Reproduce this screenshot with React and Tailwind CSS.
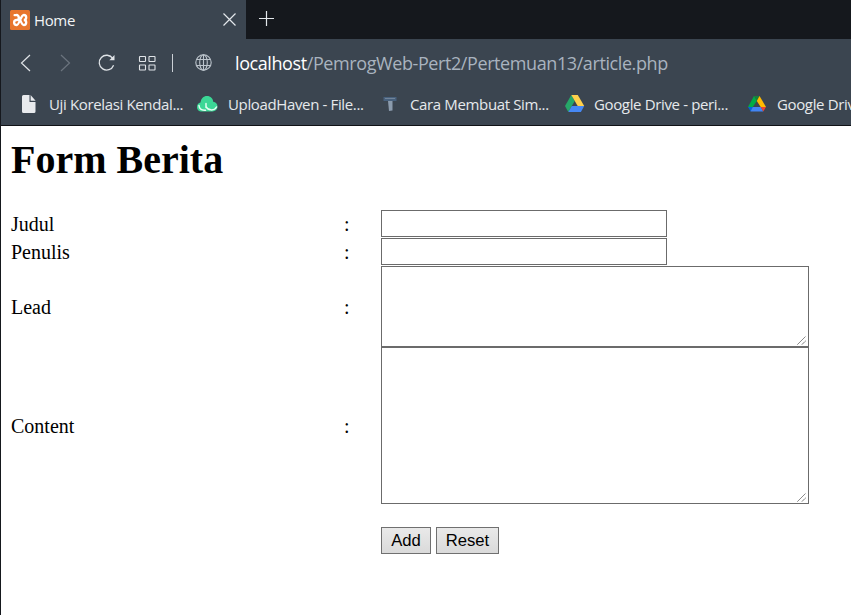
const uiFont = "font-['Open_Sans','Noto_Sans',sans-serif]";

function XamppIcon() {
  return (
    <svg width="20" height="20" viewBox="0 0 20 20" className="shrink-0">
      <rect width="20" height="20" rx="1.5" fill="#e8762d" />
      <path d="M4.6 5.2h2.2c2.2 0 3 4.8 0 4.8-3.6 0-3.6 5 0 5 2.4 0 4-10 7-10 3.2 0 3.2 5 0 5 3.2 0 3.200 5 0 5-3 0-4.200-10-7-10" fill="none" stroke="#fff" strokeWidth="2.300" strokeLinecap="round" />
    </svg>
  );
}

function Tabs() {
  return (
    <div className="flex h-[39px] bg-[#15181d]">
      <div className="flex w-[245px] items-center bg-[#3b4550] pl-[9px] pr-[10px]">
        <XamppIcon />
        <span className="ml-[4px] text-[15px] leading-[20px] tracking-[-0.36px] text-[#f2f4f6]">Home</span>
        <svg width="13" height="13" viewBox="0 0 13 13" className="ml-auto" fill="none" stroke="#e3e7eb" strokeWidth="1.2">
          <path d="M.5.5l12 12M12.500.5l-12 12" />
        </svg>
      </div>
      <svg width="15" height="15" viewBox="0 0 15 15" className="ml-[13px] mt-[11px]" fill="none" stroke="#e3e7eb" strokeWidth="1.2">
        <path d="M7.500 0v15M0 7.500h15" />
      </svg>
    </div>
  );
}

function Toolbar() {
  return (
    <div className="flex h-[47px] items-center pl-[19px]">
      <svg width="11" height="18" viewBox="0 0 11 18" fill="none" stroke="#dfe3e7" strokeWidth="1.2">
        <path d="M10 1L1.500 9l8.500 8" />
      </svg>
      <svg width="11" height="18" viewBox="0 0 11 18" className="ml-[29px]" fill="none" stroke="#6b747e" strokeWidth="1.2">
        <path d="M1 1l8.500 8L1 17" />
      </svg>
      <svg width="18" height="18" viewBox="0 0 18 18" className="ml-[27px]" fill="none" stroke="#dfe3e7" strokeWidth="1.3">
        <path d="M15.600 11.200A7.400 7.400 0 1 1 14.800 4.500" />
        <path d="M16.500 1v5.200h-5.200z" fill="#dfe3e7" stroke="none" />
      </svg>
      <svg width="18" height="16" viewBox="0 0 18 16" className="ml-[22px]" fill="none" stroke="#dfe3e7" strokeWidth="1.1">
        <rect x="1.500" y="1.500" width="6" height="5" rx=".5" />
        <rect x="11" y="1.500" width="6" height="5" rx=".5" />
        <rect x="1.500" y="10" width="6" height="5" rx=".5" />
        <rect x="11" y="10" width="6" height="5" rx=".5" />
      </svg>
      <div className="ml-[16px] h-[18px] w-px bg-[#cbd0d6]" />
      <svg width="17" height="17" viewBox="0 0 17 17" className="ml-[22px]" fill="none" stroke="#bcc4cc" strokeWidth="1.1">
        <circle cx="8.500" cy="8.500" r="7.700" />
        <ellipse cx="8.500" cy="8.500" rx="3.800" ry="7.700" />
        <path d="M8.500.8v15.400M1.800 5.500h13.400M1.800 11.500h13.400" />
      </svg>
      <div className="ml-[23px] whitespace-nowrap text-[18px] leading-[24px] tracking-[-0.41px] text-[#a9b3bf]">
        <span className="text-white">localhost</span>/PemrogWeb-Pert2/Pertemuan13/article.php
      </div>
    </div>
  );
}

function Bookmarks() {
  const text = "whitespace-nowrap text-[15px] leading-[20px] text-[#e6e9ec]";
  return (
    <div className="flex h-[39px] overflow-hidden pl-[20px] pt-[8px]">
      <div className="flex w-[175px] shrink-0 items-start">
        <svg width="16" height="20" viewBox="0 0 16 20" className="shrink-0">
          <path d="M2.500 1h6v7h6v9.500a1.500 1.500 0 0 1-1.500 1.500H2.500A1.500 1.500 0 0 1 1 17.500v-15A1.500 1.500 0 0 1 2.500 1z" fill="#e8eaed" />
          <path d="M9.600 1l5 5.800h-5z" fill="#e8eaed" />
        </svg>
        <span className={`ml-[12px] tracking-[-0.36px] ${text}`}>Uji Korelasi Kendal...</span>
      </div>
      <div className="flex w-[187px] shrink-0 items-start">
        <svg width="22" height="20" viewBox="0 0 22 20" className="shrink-0">
          <path d="M6 17.500C2.500 17.500 1 15.500 1 13c0-2.300 1.400-4 3.500-4.400C5 4.500 7.500 2 11 2c3.600 0 6 2.500 6.200 5.800 2.500.3 4.300 2 4.300 4.800s-2 4.900-5 4.900z" fill="#3bd796" />
          <path d="M3 11.500c.3 3.500 3 5 6.500 4.700M10 9.500v4M10 12.500c1.500 3.800 8 5 10.500.5" fill="none" stroke="#e3fff3" strokeWidth="1.500" strokeLinecap="round" />
        </svg>
        <span className={`ml-[10px] tracking-[-0.36px] ${text}`}>UploadHaven - File...</span>
      </div>
      <div className="flex w-[181px] shrink-0 items-start">
        <svg width="15" height="20" viewBox="0 0 15 20" className="shrink-0">
          <path d="M.5 3h13v4h-13z" fill="#48617d" />
          <path d="M5 7h4.500v9.500L6 17z" fill="#8b9bad" />
          <path d="M2 4.500h10" stroke="#71849a" />
        </svg>
        <span className={`ml-[12px] tracking-[-0.36px] ${text}`}>Cara Membuat Sim...</span>
      </div>
      <div className="flex w-[183px] shrink-0 items-start">
        <svg width="21" height="20" viewBox="0 0 21 20" className="shrink-0">
          <path d="M7.300 1L1 12l3.300 6L10.700 7z" fill="#26a768" />
          <path d="M7.300 1h6.500l6.400 11h-6.500z" fill="#ffd04b" />
          <path d="M7.800 12h12.400l-3.300 6H4.300z" fill="#4688f4" />
        </svg>
        <span className={`ml-[9px] tracking-[-0.36px] ${text}`}>Google Drive - peri...</span>
      </div>
      <div className="flex shrink-0 items-start">
        <svg width="20" height="20" viewBox="0 0 20 20" className="shrink-0">
          <path d="M7 2h5.500L9.800 7z" fill="#188038" />
          <path d="M7 2l2.800 5-4 6H1z" fill="#00ac47" />
          <path d="M12.500 2L19 13h-5.300L9.800 7z" fill="#ffba00" />
          <path d="M1 13h5l-2.300 4.500z" fill="#0066da" />
          <path d="M5.800 13h8l2.500 4.500H3.500z" fill="#4285f4" />
          <path d="M13.700 13H19l-2.700 4.500z" fill="#ea4335" />
        </svg>
        <span className={`ml-[10px] tracking-[-0.36px] ${text}`}>Google Drive</span>
      </div>
    </div>
  );
}

function ResizeGrip() {
  return (
    <svg width="10" height="10" viewBox="0 0 10 10" className="pointer-events-none absolute bottom-[2px] right-[2px]" stroke="#555" strokeWidth="1">
      <path d="M.5 9.500l8-8M5 9.500L8.500 6" strokeDasharray="1.200 .2" />
    </svg>
  );
}

function Row({ label, height, children }) {
  return (
    <div className={`flex items-center ${height}`}>
      <div className="w-[333px]">{label}</div>
      <div className="w-[37px]">:</div>
      {children}
    </div>
  );
}

export default function App() {
  return (
    <div className="h-[615px] w-[851px] overflow-hidden border-l border-[#15181d] bg-white">
      <div className={`h-[126px] border-b border-[#101216] bg-[#3b4550] ${uiFont}`}>
        <Tabs />
        <Toolbar />
        <Bookmarks />
      </div>
      <main className="pl-[10px] font-['Liberation_Serif',serif] text-[20px] leading-[24px] text-black">
        <h1 className="pt-[11px] text-[40px] font-bold leading-[46px]">Form Berita</h1>
        <form className="mt-[27px]">
          <Row label="Judul" height="h-[28px] pb-px">
            <input className="h-[27px] w-[286px] border border-[#6b6b6b] bg-white outline-none" />
          </Row>
          <Row label="Penulis" height="h-[28px] pb-px">
            <input className="h-[27px] w-[286px] border border-[#6b6b6b] bg-white outline-none" />
          </Row>
          <Row label="Lead" height="h-[81px]">
            <div className="relative h-[81px] w-[428px]">
              <textarea className="block h-full w-full resize-none border border-[#6b6b6b] bg-white outline-none" />
              <ResizeGrip />
            </div>
          </Row>
          <Row label="Content" height="h-[157px]">
            <div className="relative h-[157px] w-[428px]">
              <textarea className="block h-full w-full resize-none border border-[#6b6b6b] bg-white outline-none" />
              <ResizeGrip />
            </div>
          </Row>
          <div className="ml-[370px] mt-[23px] flex gap-[5px] font-['Liberation_Sans',Arial,sans-serif] text-[16.67px] leading-[25px]">
            <button type="button" className="h-[27px] w-[50px] border border-[#707070] bg-linear-to-b from-[#e9e9e9] to-[#dadada]">Add</button>
            <button type="button" className="h-[27px] w-[63px] border border-[#707070] bg-linear-to-b from-[#e9e9e9] to-[#dadada]">Reset</button>
          </div>
        </form>
      </main>
    </div>
  );
}
